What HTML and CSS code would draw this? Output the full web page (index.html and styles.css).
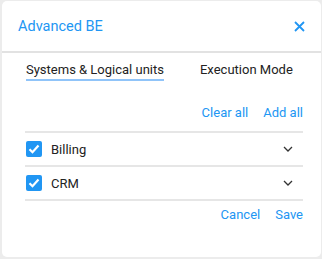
FILE: index.html
```html
<!DOCTYPE html>
<html lang="en">
<head>
  <meta charset="UTF-8" />
  <title>Advanced BE</title>
  <link rel="stylesheet" href="styles.css">
</head>
<body>
  <div class="dialog">
    <div class="dialog-header">
      <span class="dialog-title">Advanced BE</span>
      <button class="close-btn" aria-label="Close">
        <svg width="11" height="11" viewBox="0 0 11 11"><path d="M1 1L10 10M10 1L1 10" stroke="#2196f3" stroke-width="1.8" fill="none"/></svg>
      </button>
    </div>
    <div class="dialog-body">
      <div class="tabs">
        <span class="tab active">Systems &amp; Logical units</span>
        <span class="tab">Execution Mode</span>
      </div>
      <div class="actions top">
        <a class="link">Clear all</a>
        <a class="link">Add all</a>
      </div>
      <div class="list">
        <div class="row">
          <span class="checkbox"><svg width="12" height="10" viewBox="0 0 12 10"><path d="M1.5 5.2L4.5 8.2L10.5 1.5" stroke="#fff" stroke-width="2.2" fill="none"/></svg></span>
          <span class="label">Billing</span>
          <svg class="chevron" width="10" height="6" viewBox="0 0 10 6"><path d="M1 1L5 5L9 1" stroke="#333" stroke-width="1.3" fill="none"/></svg>
        </div>
        <div class="row">
          <span class="checkbox"><svg width="12" height="10" viewBox="0 0 12 10"><path d="M1.5 5.2L4.5 8.2L10.5 1.5" stroke="#fff" stroke-width="2.2" fill="none"/></svg></span>
          <span class="label">CRM</span>
          <svg class="chevron" width="10" height="6" viewBox="0 0 10 6"><path d="M1 1L5 5L9 1" stroke="#333" stroke-width="1.3" fill="none"/></svg>
        </div>
      </div>
      <div class="actions bottom">
        <a class="link">Cancel</a>
        <a class="link">Save</a>
      </div>
    </div>
  </div>
</body>
</html>
```

FILE: styles.css
```css
* {
  box-sizing: border-box;
  margin: 0;
  padding: 0;
}

html, body {
  width: 100%;
  height: 100%;
  font-family: Roboto, 'Liberation Sans', sans-serif;
  background-color: #ececec;
  overflow: hidden;
}

body {
  padding: 1px 1px 2px 2px;
}

.dialog {
  background: #fff;
  border-radius: 5px;
  height: 256px;
  display: flex;
  flex-direction: column;
}

.dialog-header {
  height: 52px;
  display: flex;
  align-items: center;
  justify-content: space-between;
  padding: 0 16px 0 16px;
  border-bottom: 2px solid #e2e2e2;
}

.dialog-title {
  color: #2196f3;
  font-size: 14.5px;
}

.close-btn {
  background: none;
  border: none;
  display: flex;
  cursor: pointer;
}

.dialog-body {
  padding: 0 18px 0 23px;
}

.tabs {
  display: flex;
  gap: 36px;
  padding: 9px 0 0 1px;
}

.tab {
  font-size: 13px;
  color: #222;
  padding-bottom: 2px;
  border-bottom: 2px solid transparent;
}

.tab.active {
  border-bottom-color: #90c4f9;
}

.actions {
  display: flex;
  justify-content: flex-end;
  gap: 15px;
}

.actions.top {
  padding: 24px 0 11px;
}

.actions.bottom {
  padding-top: 6px;
}

.link {
  color: #2196f3;
  font-size: 13px;
  cursor: pointer;
}

.list {
  border-top: 2px solid #e6e6e6;
}

.row {
  height: 34px;
  display: flex;
  align-items: center;
  padding: 0 10px 0 1px;
  border-bottom: 2px solid #e6e6e6;
}

.checkbox {
  width: 16px;
  height: 16px;
  border-radius: 2px;
  background: #2196f3;
  display: flex;
  align-items: center;
  justify-content: center;
}

.label {
  flex: 1;
  margin-left: 9px;
  font-size: 13px;
  color: #222;
}
```
